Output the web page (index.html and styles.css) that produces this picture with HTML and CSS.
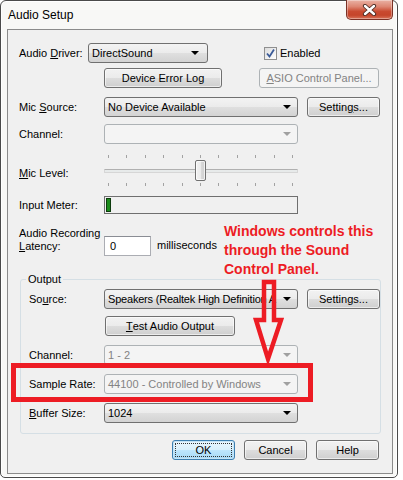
FILE: index.html
```html
<!DOCTYPE html>
<html>
<head>
<meta charset="utf-8">
<link rel="stylesheet" href="styles.css">
</head>
<body>
<div class="window">
  <div class="titlebar">
    <span class="title">Audio Setup</span>
    <div class="close">
      <svg width="15" height="12" viewBox="0 0 15 12"><path d="M3 2 L12 10 M12 2 L3 10" stroke="#4a2a22" stroke-width="4.2" stroke-linecap="round"/><path d="M3 2 L12 10 M12 2 L3 10" stroke="#ffffff" stroke-width="2.4" stroke-linecap="round"/></svg>
    </div>
  </div>
  <div class="content">
    <div class="row r1">
      <span class="lbl lbl-driver">Audio <u>D</u>river:</span>
      <div class="combo w120"><span>DirectSound</span><i class="arrow"></i></div>
      <div class="check">
        <span class="box"><svg width="11" height="11" viewBox="0 0 11 11"><path d="M2 5.5 L4.5 8.5 L9 1.5" fill="none" stroke="#3a5a98" stroke-width="1.8"/></svg></span>
        <span>Enabled</span>
      </div>
    </div>
    <div class="row r2">
      <div class="btn btn-del">Device Error Log</div>
      <div class="btn btn-asio disabled"><u>A</u>SIO Control Panel...</div>
    </div>
    <div class="row r3">
      <span class="lbl">Mic <u>S</u>ource:</span>
      <div class="combo w194"><span>No Device Available</span><i class="arrow"></i></div>
      <div class="btn btn-set">Settin<u>g</u>s...</div>
    </div>
    <div class="row r4">
      <span class="lbl">Channel:</span>
      <div class="combo w194 disabled"><span></span><i class="arrow"></i></div>
    </div>
    <div class="row r-slider">
      <span class="lbl lbl-level"><u>M</u>ic Level:</span>
      <div class="slider">
        <div class="ticks"><i></i><i></i><i></i><i></i><i></i><i></i><i></i><i></i><i></i><i></i><i></i></div>
        <div class="track-area"><span class="track"></span><span class="thumb"></span></div>
        <div class="ticks"><i></i><i></i><i></i><i></i><i></i><i></i><i></i><i></i><i></i><i></i><i></i></div>
      </div>
    </div>
    <div class="row r-meter">
      <span class="lbl">Input Meter:</span>
      <div class="meter"><span class="level"></span></div>
    </div>
    <div class="row r-latency">
      <span class="lbl lbl-two">Audio Recording<br><u>L</u>atency:</span>
      <div class="edit">0</div>
      <span class="unit">milliseconds</span>
    </div>
    <fieldset class="group">
      <legend>Output</legend>
      <div class="row">
        <span class="lbl glbl">So<u>u</u>rce:</span>
        <div class="combo w194"><span class="tight">Speakers (Realtek High Definition A</span><i class="arrow"></i></div>
        <div class="btn btn-set">Settings...</div>
      </div>
      <div class="row g2">
        <div class="btn btn-test"><u>T</u>est Audio Output</div>
      </div>
      <div class="row g3">
        <span class="lbl glbl">Channel:</span>
        <div class="combo w194 disabled"><span>1 - 2</span><i class="arrow"></i></div>
      </div>
      <div class="row g3">
        <span class="lbl glbl">Sample Rate:</span>
        <div class="combo w194 disabled"><span>44100 - Controlled by Windows</span><i class="arrow"></i></div>
      </div>
      <div class="row g3">
        <span class="lbl glbl"><u>B</u>uffer Size:</span>
        <div class="combo w194"><span>1024</span><i class="arrow"></i></div>
      </div>
    </fieldset>
    <div class="row r-buttons">
      <div class="btn btn-dlg btn-ok"><span class="focus">OK</span></div>
      <div class="btn btn-dlg">Cancel</div>
      <div class="btn btn-dlg">Help</div>
    </div>

    <div class="note">Windows controls this<br>through the Sound<br>Control Panel.</div>
    <svg class="marks" width="384" height="443" viewBox="8 30 384 443">
      <rect x="13.5" y="365.5" width="297" height="34" fill="none" stroke="#ed1c24" stroke-width="5"/>
      <polygon points="264,282 274,282 274,320 281,320 268,359 256,320 264,320" fill="none" stroke="#ed1c24" stroke-width="4.5" stroke-linejoin="miter"/>
    </svg>
  </div>
</div>
</body>
</html>
```

FILE: styles.css
```css
* { box-sizing: border-box; }
html, body { margin: 0; padding: 0; background: #ffffff; }
body {
  font-family: "Liberation Sans", Arial, sans-serif;
  font-size: 11px;
  color: #000;
  width: 403px;
  height: 480px;
  overflow: hidden;
}
u { text-decoration: underline; text-underline-offset: 1px; }

.window {
  width: 398px;
  height: 478px;
  border: 1px solid #4a4a4a;
  border-radius: 6px 6px 5px 5px;
  background: #f8f8f6;
  box-shadow: inset 0 0 0 1px #ffffff;
  display: flex;
  flex-direction: column;
}
.titlebar {
  height: 28px;
  display: flex;
  justify-content: space-between;
  align-items: flex-start;
  padding: 0 4px 0 7px;
}
.title {
  font-size: 12px;
  line-height: 15px;
  margin-top: 7px;
}
.close {
  width: 47px;
  height: 20px;
  margin-top: -1px;
  border: 1px solid #7a3226;
  border-top: none;
  border-radius: 0 0 5px 5px;
  background: linear-gradient(#eab2a4 0%, #dd8672 35%, #c94a30 60%, #c5452a 80%, #d8735a 100%);
  box-shadow: inset 0 0 0 1px rgba(255,255,255,0.35);
  display: flex;
  align-items: center;
  justify-content: center;
}

.content {
  margin-left: 6px;
  width: 386px;
  height: 445px;
  border: 1px solid #8b8b8b;
  background: #f0f0f0;
  padding: 13px 13px 0 11px;
  position: relative;
}

.row { display: flex; align-items: center; height: 20px; }
.lbl { flex: none; width: 85px; white-space: nowrap; }
.lbl-driver { width: 69px; }

.r2 { margin-top: 5px; }
.r3 { margin-top: 9px; }
.r4 { margin-top: 7px; }
.r-slider { margin-top: 9px; height: 35px; }
.r-meter { margin-top: 8px; height: 18px; }
.r-latency { margin-top: 12px; height: 31px; align-items: flex-start; }

.combo {
  flex: none;
  height: 20px;
  border: 1px solid #707070;
  border-radius: 3px;
  background: linear-gradient(#f3f3f3 0%, #ebebeb 50%, #dfdfdf 51%, #d3d3d3 100%);
  display: flex;
  align-items: center;
  justify-content: space-between;
  padding: 0 6px 0 3px;
  white-space: nowrap;
  overflow: hidden;
}
.combo span { min-width: 0; }
.combo .tight { letter-spacing: -0.2px; }
.combo .arrow {
  flex: none;
  width: 0; height: 0;
  border-left: 4px solid transparent;
  border-right: 4px solid transparent;
  border-top: 4px solid #000;
  margin-left: 1px;
}
.combo.disabled {
  border-color: #adb2b5;
  background: #f4f4f4;
  color: #838383;
}
.combo.disabled .arrow { border-top-color: #a0a0a0; }
.w120 { width: 120px; padding-right: 8px; }
.w194 { width: 194px; }

.check { display: flex; align-items: center; margin-left: 56px; }
.box {
  width: 13px; height: 13px;
  border: 1px solid #8f8f8f;
  background: linear-gradient(135deg, #dcdcdc, #ffffff);
  display: flex; align-items: center; justify-content: center;
  margin-right: 3px;
}

.btn {
  flex: none;
  height: 20px;
  border: 1px solid #707070;
  border-radius: 3px;
  background: linear-gradient(#f2f2f2 0%, #ebebeb 50%, #dddddd 51%, #cfcfcf 100%);
  box-shadow: inset 0 0 0 1px rgba(255,255,255,0.6);
  display: flex;
  align-items: center;
  justify-content: center;
  white-space: nowrap;
}
.btn.disabled {
  border-color: #adb2b5;
  background: #f4f4f4;
  color: #838383;
  box-shadow: none;
}
.btn-del { width: 118px; margin-left: 85px; }
.btn-asio { width: 120px; margin-left: 37px; }
.btn-set { width: 73px; margin-left: 9px; }
.btn-test { width: 130px; margin-left: 76px; }

.lbl-level { margin-top: 5px; }
.slider { width: 194px; height: 35px; display: flex; flex-direction: column; }
.ticks {
  display: flex;
  justify-content: space-between;
  padding: 0 5px 0 4px;
  height: 3px;
  margin-top: 2px;
}
.ticks i { width: 1px; background: #a2a2a2; }
.track-area { display: grid; height: 21px; margin-top: 2px; }
.track {
  grid-area: 1 / 1;
  align-self: center;
  height: 4px;
  border: 1px solid #d6d6d6;
  border-top-color: #b0b0b0;
  background: #e7eaea;
  border-radius: 1px;
}
.thumb {
  grid-area: 1 / 1;
  width: 11px;
  height: 21px;
  margin-left: 91px;
  border: 1px solid #707070;
  border-radius: 2px;
  background: linear-gradient(90deg, #f2f2f2, #ebebeb 50%, #dbdbdb 51%, #cfcfcf);
  box-shadow: inset 0 0 0 1px rgba(255,255,255,0.7);
}

.meter {
  width: 194px;
  height: 18px;
  border: 1px solid #6f6f6f;
  background: #f0f0f0;
  display: flex;
  padding: 1px;
}
.level {
  width: 5px;
  height: 100%;
  background: #1b8c1b;
  border: 1px solid #0d3b0d;
}

.lbl-two { line-height: 13px; padding-top: 1px; }
.edit {
  margin-top: 10px;
  width: 47px;
  height: 20px;
  border: 1px solid #abadb3;
  border-top-color: #8a8d94;
  background: #ffffff;
  padding: 3px 0 0 5px;
}
.unit { margin-top: 13px; margin-left: 6px; }

.group {
  margin: 15px 0 0 1px;
  width: 361px;
  height: 162px;
  border: 1px solid #d5dfe5;
  border-radius: 3px;
  padding: 3px 0 10px 8px;
  min-width: 0;
}
.group legend {
  padding: 0 2px;
  margin-left: -3px;
  line-height: 14px;
  font-size: 11px;
}
.glbl { width: 75px; }
.g2 { margin-top: 7px; }
.g3 { margin-top: 9px; }

.r-buttons { margin-top: 6px; justify-content: flex-end; gap: 9px; }
.btn-dlg { width: 63px; }
.btn-ok {
  border-color: #3c7fb1;
  background: linear-gradient(#eaf6fd 0%, #d9f0fc 50%, #bee6fd 51%, #a7d9f5 100%);
  box-shadow: inset 0 0 0 1px #c5e4f6;
  padding: 2px;
}
.btn-ok .focus {
  width: 100%;
  height: 100%;
  border: 1px dotted #333;
  display: flex;
  align-items: center;
  justify-content: center;
}

.note {
  position: absolute;
  left: 216px;
  top: 192px;
  font-family: "Liberation Sans", Arial, sans-serif;
  font-weight: bold;
  font-size: 14px;
  line-height: 19px;
  color: #ed1c24;
  white-space: nowrap;
}
.marks {
  position: absolute;
  left: 0;
  top: 0;
  pointer-events: none;
}
```
